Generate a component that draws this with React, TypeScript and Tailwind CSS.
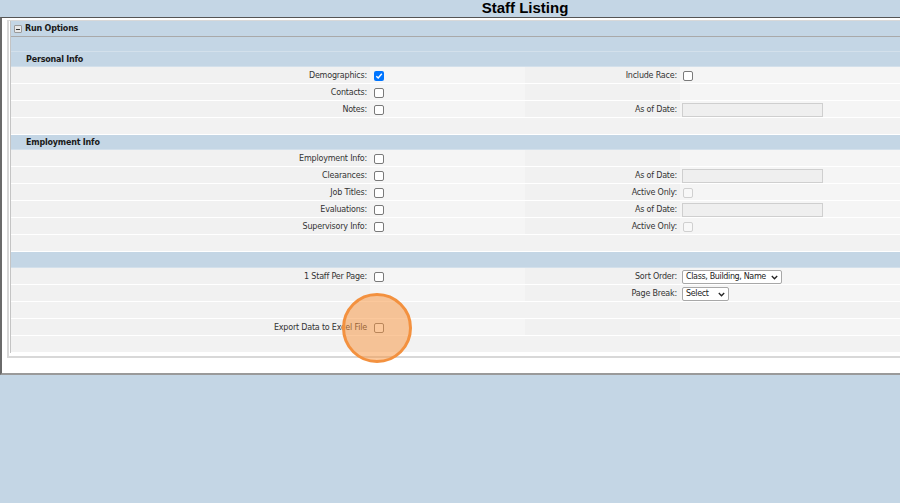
import React from "react";

type Val =
  | { t: "cb"; checked?: boolean; disabled?: boolean }
  | { t: "date" }
  | { t: "select"; text: string; w: string }
  | null;

type Row =
  | { k: "blue"; text?: string; h: string }
  | { k: "empty" }
  | { k: "data"; l1?: string; v1?: Val; l2?: string; v2?: Val };

const rows: Row[] = [
  { k: "blue", h: "h-[15px]" },
  { k: "blue", text: "Personal Info", h: "h-[15px]" },
  { k: "data", l1: "Demographics:", v1: { t: "cb", checked: true }, l2: "Include Race:", v2: { t: "cb" } },
  { k: "data", l1: "Contacts:", v1: { t: "cb" } },
  { k: "data", l1: "Notes:", v1: { t: "cb" }, l2: "As of Date:", v2: { t: "date" } },
  { k: "empty" },
  { k: "blue", text: "Employment Info", h: "h-[15px]" },
  { k: "data", l1: "Employment Info:", v1: { t: "cb" } },
  { k: "data", l1: "Clearances:", v1: { t: "cb" }, l2: "As of Date:", v2: { t: "date" } },
  { k: "data", l1: "Job Titles:", v1: { t: "cb" }, l2: "Active Only:", v2: { t: "cb", disabled: true } },
  { k: "data", l1: "Evaluations:", v1: { t: "cb" }, l2: "As of Date:", v2: { t: "date" } },
  { k: "data", l1: "Supervisory Info:", v1: { t: "cb" }, l2: "Active Only:", v2: { t: "cb", disabled: true } },
  { k: "empty" },
  { k: "blue", h: "h-[16px]" },
  {
    k: "data",
    l1: "1 Staff Per Page:",
    v1: { t: "cb" },
    l2: "Sort Order:",
    v2: { t: "select", text: "Class, Building, Name", w: "w-[100px]" },
  },
  { k: "data", l2: "Page Break:", v2: { t: "select", text: "Select", w: "w-[47px]" } },
  { k: "empty" },
  { k: "data", l1: "Export Data to Excel File", v1: { t: "cb" } },
  { k: "empty" },
];

function Checkbox({ checked, disabled }: { checked?: boolean; disabled?: boolean }) {
  if (checked) {
    return (
      <span className="ml-[1px] inline-flex h-[10px] w-[10px] items-center justify-center rounded-[2px] bg-[#0075ff]">
        <svg width="8" height="8" viewBox="0 0 8 8">
          <path d="M1.3 4.2 L3.2 6 L6.8 1.8" fill="none" stroke="white" strokeWidth="1.4" />
        </svg>
      </span>
    );
  }
  return (
    <span
      className={
        disabled
          ? "ml-[1px] inline-block h-[10px] w-[10px] rounded-[2px] border border-[#d0d0d0] bg-[#f8f8f8]"
          : "ml-[1px] inline-block h-[10px] w-[10px] rounded-[2px] border border-[#7a7a7a] bg-white"
      }
    />
  );
}

function Value({ v }: { v: Val }) {
  if (!v) return null;
  if (v.t === "cb") return <Checkbox checked={v.checked} disabled={v.disabled} />;
  if (v.t === "date")
    return <span className="inline-block h-[14px] w-[141px] border border-[#cfcfcf] bg-[#efefef]" />;
  return (
    <span
      className={`${v.w} inline-flex h-[14px] items-center justify-between rounded-[2px] border border-[#a8a8a8] bg-white pl-[3px] pr-[3px] pt-[1px] tracking-[-0.35px] text-[#222]`}
    >
      <span>{v.text}</span>
      <svg width="7" height="5" viewBox="0 0 7 5" className="shrink-0">
        <path d="M0.8 1 L3.5 3.8 L6.2 1" fill="none" stroke="#222" strokeWidth="1.3" />
      </svg>
    </span>
  );
}

export default function App() {
  return (
    <div
      className="relative h-[503px] w-[900px] overflow-hidden bg-[#c4d6e5] text-[8px] tracking-[-0.2px] text-[#333]"
      style={{ fontFamily: '"DejaVu Sans", Verdana, sans-serif' }}
    >
      <div className="w-[1050px]">
        <div
          className="h-[17px] text-center text-[15px] font-bold leading-[16px] tracking-normal text-black"
          style={{ fontFamily: '"Liberation Sans", Arial, sans-serif' }}
        >
          Staff Listing
        </div>
        <div className="border-t border-l-2 border-b-2 border-t-[#555] border-l-[#6a6a6a] border-b-[#9a9a9a] bg-white pt-[2px] pl-[5px] pb-[15px]">
          <div className="border-t border-l-2 border-b-2 border-[#d8d8d8] pl-[1px] pb-[3px]">
            <div className="border-l border-[#c4c4c4]">
              <div className="flex h-[16px] items-center border-b border-[#a9a9a9] bg-[#c4d6e5] pl-[2px] pt-[1px]">
                <span className="ml-[1px] flex h-[8px] w-[8px] items-center justify-center rounded-[1px] border border-[#9a9a9a] bg-[#e8e8e8]">
                  <span className="h-[1px] w-[4px] bg-[#333]" />
                </span>
                <span className="ml-[3px] font-bold text-[#1a1a1a]">Run Options</span>
              </div>
              {rows.map((r, i) => {
                if (r.k === "blue")
                  return (
                    <div
                      key={i}
                      className={`${r.h} flex items-center border-b border-[#d3e0eb] bg-[#c4d6e5] pl-[15px] pt-[2px] font-bold text-[#1a1a1a]`}
                    >
                      {r.text}
                    </div>
                  );
                if (r.k === "empty")
                  return <div key={i} className="h-[17px] border-b border-white bg-[#f2f2f2]" />;
                return (
                  <div
                    key={i}
                    className="grid h-[17px] grid-cols-[359px_155px_155px_1fr] border-b border-white"
                  >
                    <div className="flex items-center justify-end bg-[#f1f1f1] pr-[3px] pt-[2px]">{r.l1}</div>
                    <div className="flex items-center bg-[#f5f5f5] pl-[3px] pt-[1px]">
                      <Value v={r.v1 ?? null} />
                    </div>
                    <div className="flex items-center justify-end bg-[#f1f1f1] pr-[3px] pt-[2px]">{r.l2}</div>
                    <div className="flex items-center bg-[#f5f5f5] pl-[2px] pt-[1px]">
                      <Value v={r.v2 ?? null} />
                    </div>
                  </div>
                );
              })}
            </div>
          </div>
        </div>
      </div>
      <div className="absolute left-[342px] top-[293px] h-[70px] w-[70px] rounded-full border-[3px] border-[#f3913f] bg-[rgba(247,146,58,0.5)]" />
    </div>
  );
}
